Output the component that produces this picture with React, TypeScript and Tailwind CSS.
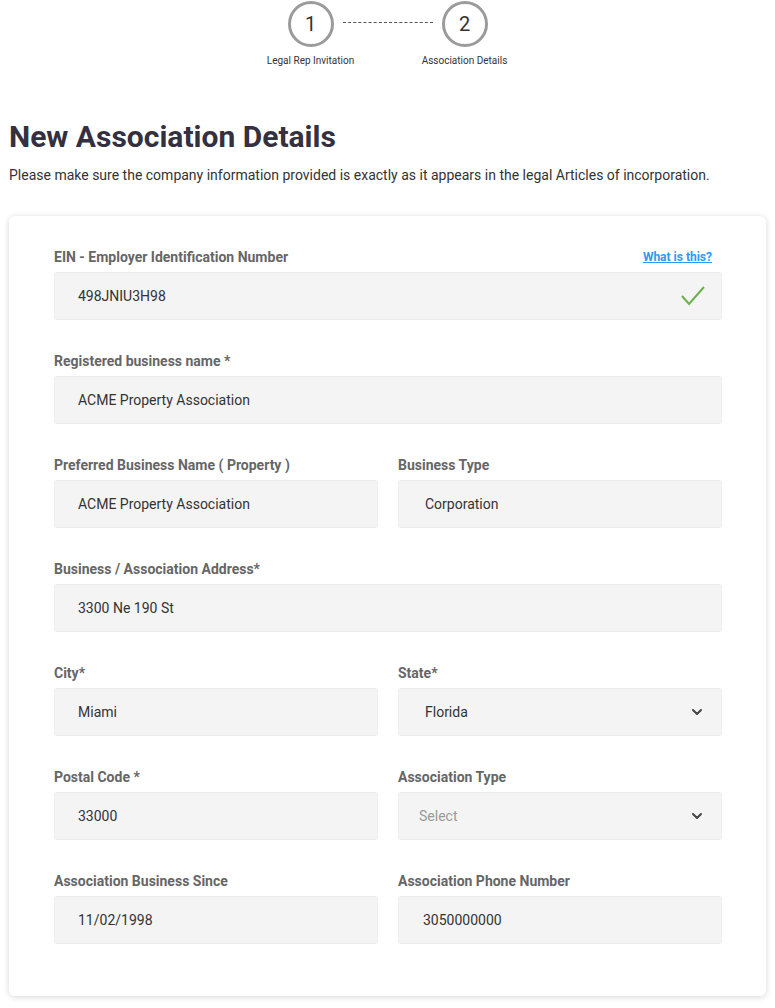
import { ChevronDown } from 'lucide-react'

const font = { fontFamily: 'Roboto, "Liberation Sans", sans-serif' }

const Step = ({ n, label }: { n: number; label: string }) => (
  <div className="flex flex-col items-center w-[100px]">
    <div className="w-[46px] h-[46px] rounded-full border-[3px] border-[#9b9b9b] flex items-center justify-center text-[20px] text-[#333]">
      {n}
    </div>
    <div className="mt-[7px] text-[10px] leading-[14px] text-[#333] whitespace-nowrap">{label}</div>
  </div>
)

const Field = ({
  label,
  value,
  placeholder,
  select,
  right,
  extra,
  pad = 'pl-[23px]',
}: {
  label: string
  value?: string
  placeholder?: string
  select?: boolean
  right?: React.ReactNode
  extra?: React.ReactNode
  pad?: string
}) => (
  <div className="flex flex-col">
    <div className="flex items-center justify-between h-4 mb-[7px]">
      <span className="text-[14px] font-bold text-[#666] leading-4">{label}</span>
      {extra}
    </div>
    <div className={`h-12 flex items-center justify-between bg-[#f4f4f4] border border-[#ececec] rounded-[3px] ${pad} pr-4`}>
      {value ? (
        <span className="text-[14px] text-[#333]">{value}</span>
      ) : (
        <span className="text-[14px] text-[#9a9a9a]">{placeholder}</span>
      )}
      {select && <ChevronDown className="w-4 h-4 text-[#444]" strokeWidth={3} />}
      {right}
    </div>
  </div>
)

export default function App() {
  return (
    <div className="bg-white min-h-[1008px] px-[9px] pt-px" style={font}>
      <div className="flex items-start justify-center">
        <Step n={1} label="Legal Rep Invitation" />
        <div className="w-[90px] mt-[21px] mx-[-18px] border-t border-dashed border-[#555]" />
        <Step n={2} label="Association Details" />
      </div>

      <h1 className="mt-[51px] text-[30px] font-bold text-[#34303f] leading-9">New Association Details</h1>
      <p className="mt-[10px] text-[14px] leading-5 text-[#333]">
        Please make sure the company information provided is exactly as it appears in the legal Articles of incorporation.
      </p>

      <div className="mt-[31px] bg-white rounded-md shadow-[0_1px_6px_rgba(0,0,0,0.16)] pt-[33px] pb-[52px] pl-[45px] pr-[44px] w-[757px]">
        <div className="flex flex-col gap-[33px]">
          <Field
            label="EIN - Employer Identification Number"
            value="498JNIU3H98"
            extra={
              <a className="text-[12px] font-bold text-[#2b9af3] underline mr-[10px] leading-4">What is this?</a>
            }
            right={
              <svg width="26" height="22" viewBox="0 0 26 22" className="mr-[-1px]">
                <path d="M2 11 L9 19 L24 2" fill="none" stroke="#6ab04c" strokeWidth="2" />
              </svg>
            }
          />
          <Field label="Registered business name *" value="ACME Property Association" />
          <div className="grid grid-cols-2 gap-5">
            <Field label="Preferred Business Name ( Property )" value="ACME Property Association" />
            <Field label="Business Type" value="Corporation" pad="pl-[26px]" />
          </div>
          <Field label="Business / Association Address*" value="3300 Ne 190 St" />
          <div className="grid grid-cols-2 gap-5">
            <Field label="City*" value="Miami" />
            <Field label="State*" value="Florida" select pad="pl-[26px]" />
          </div>
          <div className="grid grid-cols-2 gap-5">
            <Field label="Postal Code *" value="33000" />
            <Field label="Association Type" placeholder="Select" select pad="pl-[20px]" />
          </div>
          <div className="grid grid-cols-2 gap-5">
            <Field label="Association Business Since" value="11/02/1998" />
            <Field label="Association Phone Number" value="3050000000" pad="pl-[24px]" />
          </div>
        </div>
      </div>
    </div>
  )
}
